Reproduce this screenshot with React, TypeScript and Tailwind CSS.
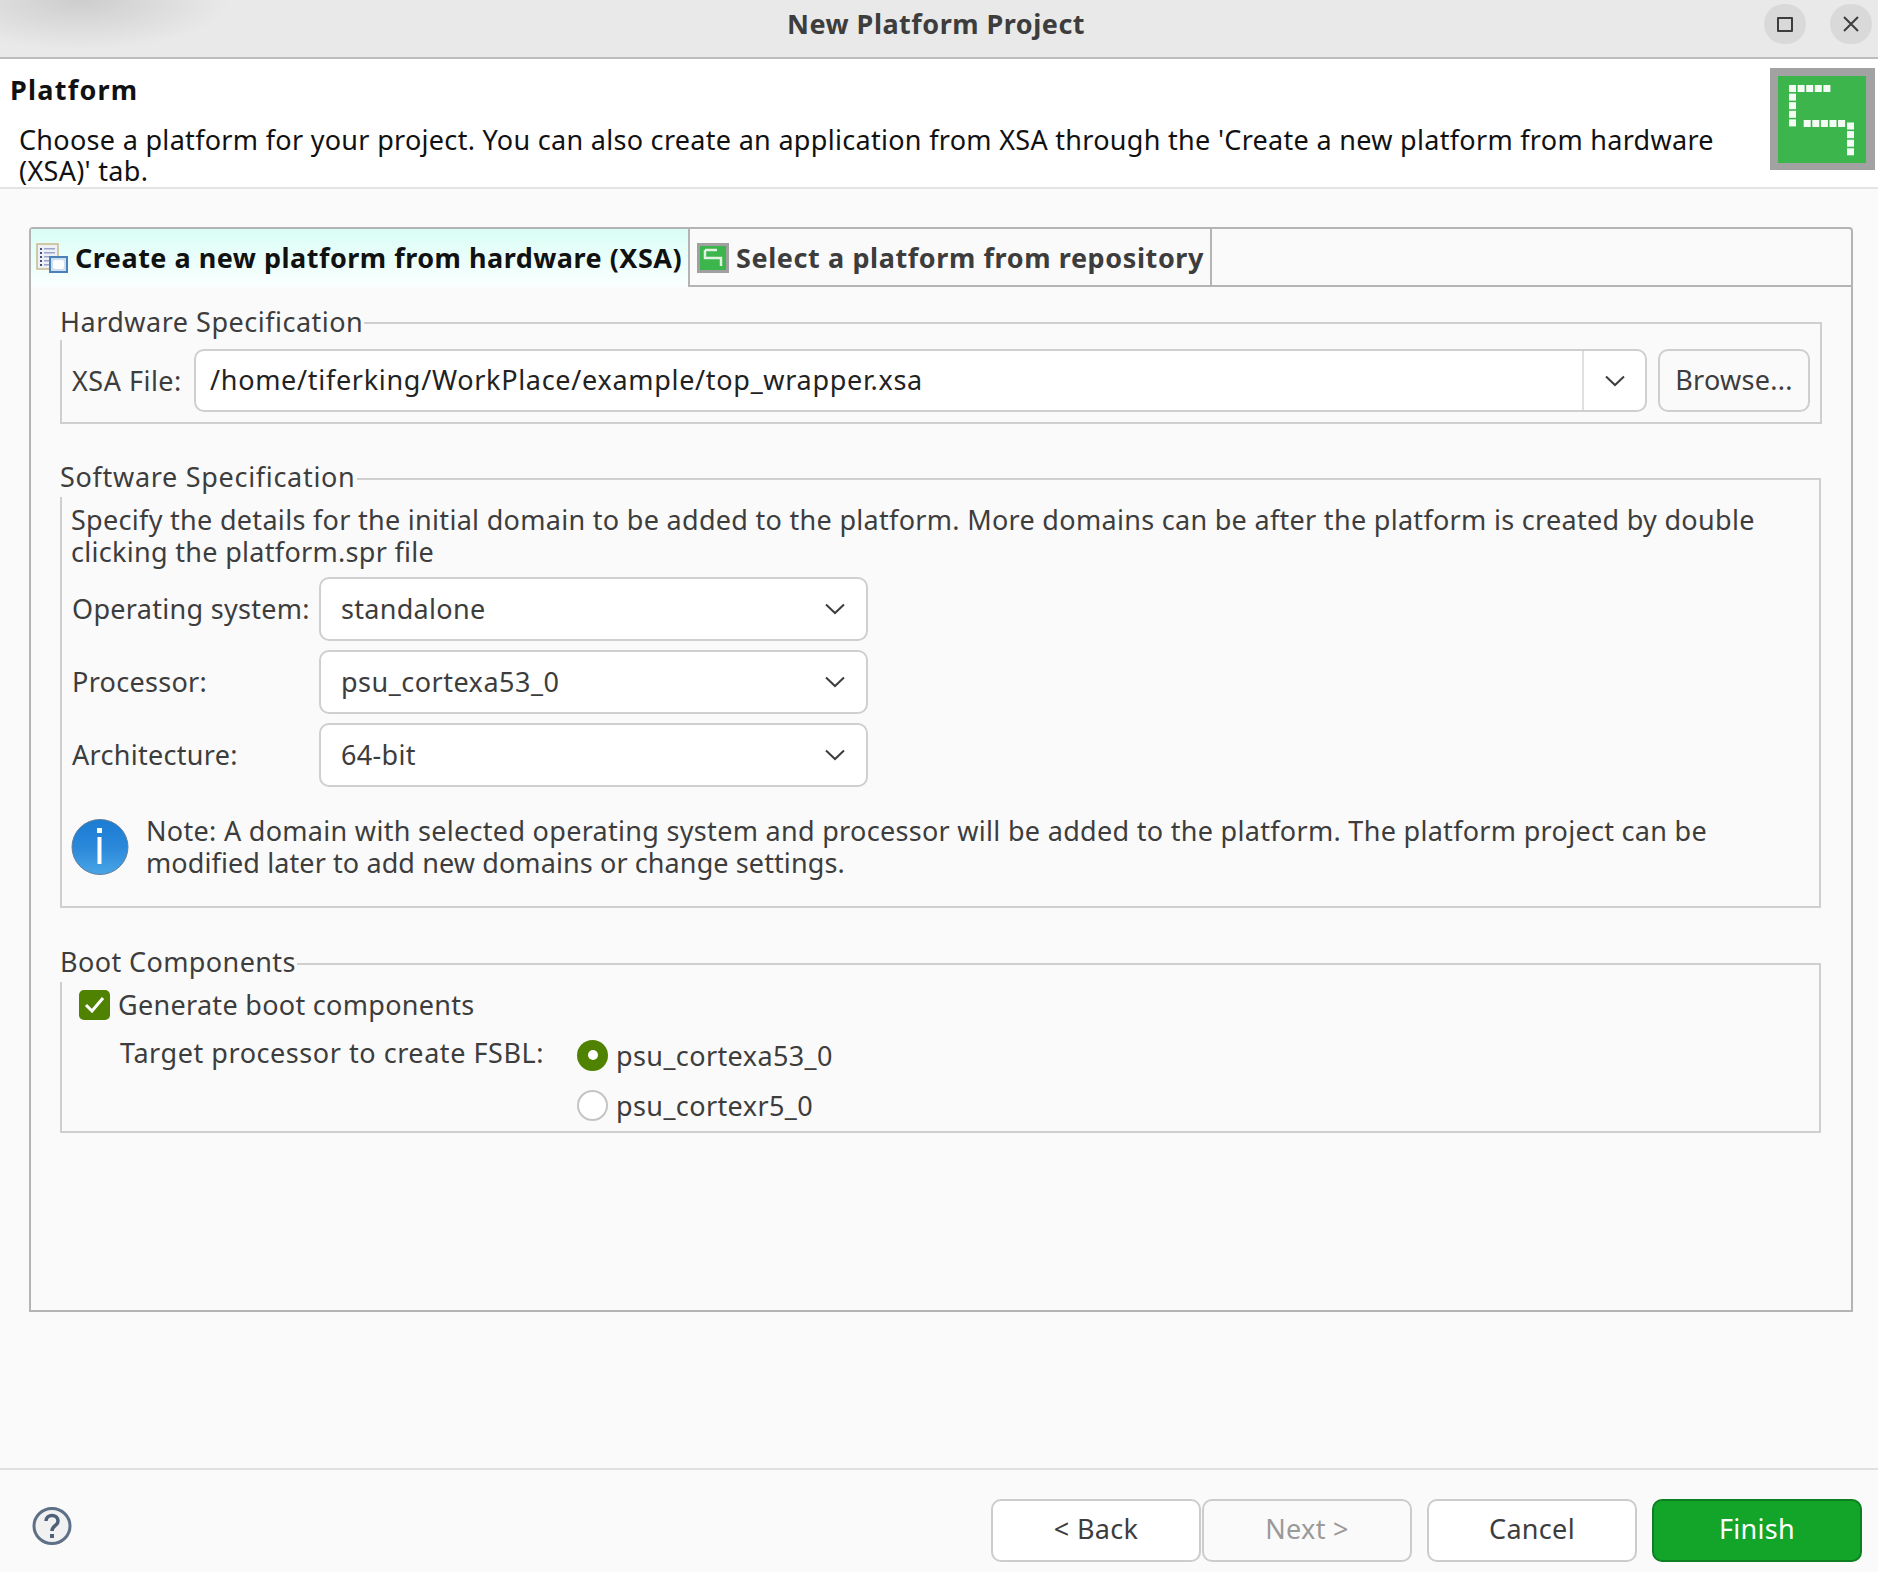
import React from "react";

const Chevron = () => (
	<svg width="22" height="12" viewBox="0 0 22 12" fill="none" stroke="#3d3d3d" strokeWidth="2">
		<path d="M2 1.5 L11 10 L20 1.5" />
	</svg>
);

const dots = [
	...[0, 1, 2, 3, 4].map((i) => [19 + i * 8.6, 17]),
	...[1, 2, 3, 4].map((i) => [19, 17 + i * 8.6]),
	...[0, 1, 2, 3, 4].map((i) => [33.7 + i * 8.6, 52]),
	...[0, 1, 2, 3].map((i) => [77, 54.5 + i * 8.6]),
];

const PlatformIcon = () => (
	<svg width="105" height="102" viewBox="0 0 105 102">
		<rect width="105" height="102" fill="#a2a2a2" />
		<rect x="8" y="8" width="88" height="87" fill="#3cb54c" />
		{dots.map(([x, y], i) => (
			<rect key={i} x={x} y={y} width="7" height="7" fill="#f4fbf4" />
		))}
	</svg>
);

const SmallPlatformIcon = () => (
	<svg width="32" height="30" viewBox="0 0 32 30">
		<rect width="32" height="30" fill="#a0a0a0" />
		<rect x="3" y="3" width="26" height="24" fill="#3cb54c" />
		<path d="M8 7 H20 M8 7 V15 H24 V23" fill="none" stroke="#dff3e0" strokeWidth="2.5" />
	</svg>
);

const HardwareIcon = () => (
	<svg width="32" height="30" viewBox="0 0 32 30">
		<rect x="1" y="1" width="21" height="25" fill="#eef0f8" stroke="#c8b98c" strokeWidth="1.5" />
		{[6, 10, 14, 18, 22].map((y) => (
			<g key={y}>
				<rect x="4" y={y - 1} width="2" height="2" fill="#44507a" />
				<rect x="8" y={y - 1} width="11" height="1.5" fill="#9aa6c8" />
			</g>
		))}
		<rect x="14" y="14" width="17" height="15" fill="#cfdff2" stroke="#4d7fb8" strokeWidth="2" />
		<rect x="17" y="17" width="11" height="9" rx="2" fill="#fbfdff" />
	</svg>
);

const InfoIcon = () => (
	<svg width="58" height="56" viewBox="0 0 58 56" className="shrink-0">
		<defs>
			<linearGradient id="info" x1="0" y1="0" x2="0" y2="1">
				<stop offset="0" stopColor="#1b7cd3" />
				<stop offset="0.5" stopColor="#2a88da" />
				<stop offset="1" stopColor="#4aa5e6" />
			</linearGradient>
		</defs>
		<ellipse cx="29" cy="28" rx="28" ry="27.5" fill="url(#info)" stroke="#5f7f9c" strokeWidth="1" />
		<rect x="26" y="9" width="5" height="5" fill="#fff" />
		<rect x="26.5" y="18" width="4" height="27" fill="#fff" />
	</svg>
);

const HelpIcon = () => (
	<svg width="40" height="38" viewBox="0 0 40 38">
		<ellipse cx="20" cy="19" rx="18" ry="17.5" fill="#f1f1f1" stroke="#5d7088" strokeWidth="3" />
		<path d="M14 14 C14 6.5 26 6.5 26 14 C26 19 20 18.5 20 24" fill="none" stroke="#4d6078" strokeWidth="3.5" />
		<rect x="18" y="27" width="4" height="4" fill="#4d6078" />
	</svg>
);

const SelectRow = ({ label, value, valueClass }: { label: string; value: string; valueClass?: string }) => (
	<div className="flex items-center">
		<div className="w-[257px] pl-[10px]">{label}</div>
		<div className="w-[549px] h-[64px] flex items-center justify-between pl-[20px] pr-[20px] bg-white border-2 border-[#cfcfcf] rounded-[10px]">
			<span className={valueClass}>{value}</span>
			<Chevron />
		</div>
	</div>
);

const WizardButton = ({ children, className }: { children: React.ReactNode; className: string }) => (
	<div className={`w-[210px] h-[63px] pb-[3px] flex items-center justify-center rounded-[10px] border-2 ${className}`}>
		{children}
	</div>
);

export default function App() {
	return (
		<div
			className="w-[1878px] h-[1572px] flex flex-col bg-[#fafafa] text-[#3d3d3d] text-[27px] tracking-[0.3px] leading-[32px] overflow-hidden"
			style={{ fontFamily: '"Noto Sans", sans-serif' }}
		>
			<header className="h-[59px] shrink-0 flex items-center justify-between pr-[6px] bg-[#e9e9e9] bg-[radial-gradient(ellipse_150px_50px_at_80px_0px,#cdcdcd,#e9e9e900)] border-b-2 border-[#bcbcbc]">
				<div className="w-[108px]" />
				<div className="font-bold tracking-[0.5px] text-[#3d3d3d] pb-[9px]">New Platform Project</div>
				<div className="flex gap-[24px] -mt-[9px]">
					<div className="w-[42px] h-[40px] rounded-full bg-[#d9d9d9] flex items-center justify-center">
						<div className="w-[16px] h-[15px] border-2 border-[#3d3d3d] rounded-[1px]" />
					</div>
					<div className="w-[42px] h-[40px] rounded-full bg-[#d9d9d9] flex items-center justify-center">
						<svg width="16" height="16" viewBox="0 0 16 16" stroke="#3d3d3d" strokeWidth="2">
							<path d="M1 1 L15 15 M15 1 L1 15" />
						</svg>
					</div>
				</div>
			</header>

			<section className="h-[130px] shrink-0 flex justify-between bg-white border-b-2 border-[#e4e4e4] text-[#111]">
				<div className="pl-[10px] pt-[15px] whitespace-nowrap">
					<div className="font-bold tracking-[1.25px]">Platform</div>
					<div className="pl-[9px] mt-[18px] leading-[31px]">
						Choose a platform for your project. You can also create an application from XSA through the 'Create a new platform from hardware
						<br />
						(XSA)' tab.
					</div>
				</div>
				<div className="pt-[9px] pr-[3px]">
					<PlatformIcon />
				</div>
			</section>

			<main className="flex-1 pl-[29px] pr-[25px] pt-[38px]">
				<div className="h-[1085px] border-2 border-[#b4b4b4] rounded-t-[4px]">
					<div className="h-[58px] flex border-b-2 border-[#b4b4b4] font-bold tracking-[0.5px] whitespace-nowrap">
						<div className="w-[659px] h-[58px] flex items-center gap-[7px] pl-[5px] bg-gradient-to-b from-[#d9fdf5] to-[#fafffe] border-r-2 border-[#b4b4b4] text-[#111]">
							<HardwareIcon />
							<span>Create a new platform from hardware (XSA)</span>
						</div>
						<div className="w-[522px] h-[56px] pt-[1px] flex items-center gap-[7px] pl-[7px] border-r-2 border-[#b4b4b4]">
							<SmallPlatformIcon />
							<span className="tracking-[0.6px]">Select a platform from repository</span>
						</div>
					</div>

					<div className="pl-[29px] pr-[30px] pt-[19px]">
						<fieldset className="border-2 border-[#cfcfcf] pl-[9px] pr-[10px] pt-[9px] pb-[10px]">
							<legend className="-ml-[11px] pr-[1px] pb-[2px] tracking-[0.5px]">Hardware Specification</legend>
							<div className="flex items-center">
								<div className="w-[123px] shrink-0 pl-[1px] tracking-[0.5px]">XSA File:</div>
								<div className="w-[1453px] h-[63px] flex bg-white border-2 border-[#cfcfcf] rounded-[10px]">
									<div className="flex-1 flex items-center pl-[14px] pb-[2px] text-[#222] tracking-[0.7px]">/home/tiferking/WorkPlace/example/top_wrapper.xsa</div>
									<div className="w-[63px] flex items-center justify-center border-l-2 border-[#e0e0e0]">
										<Chevron />
									</div>
								</div>
								<div className="w-[152px] h-[63px] ml-[11px] pb-[2px] flex items-center justify-center bg-[#fafafa] border-2 border-[#cfcfcf] rounded-[10px]">Browse...</div>
							</div>
						</fieldset>

						<fieldset className="mt-[37px] border-2 border-[#cfcfcf] pt-[7px] pb-[27px]">
							<legend className="-ml-[2px] pr-[1px] pb-[4px] tracking-[0.7px]">Software Specification</legend>
							<div className="pl-[9px] whitespace-nowrap">
								Specify the details for the initial domain to be added to the platform. More domains can be after the platform is created by double
								<br />
								clicking the platform.spr file
							</div>
							<div className="mt-[9px] flex flex-col gap-[9px]">
								<SelectRow label="Operating system:" value="standalone" />
								<SelectRow label="Processor:" value="psu_cortexa53_0" valueClass="tracking-[0.5px]" />
								<SelectRow label="Architecture:" value="64-bit" />
							</div>
							<div className="mt-[28px] pl-[9px] flex items-center gap-[17px] whitespace-nowrap">
								<InfoIcon />
								<div>
									Note: A domain with selected operating system and processor will be added to the platform. The platform project can be
									<br />
									<span className="tracking-[0.1px]">modified later to add new domains or change settings.</span>
								</div>
							</div>
						</fieldset>

						<fieldset className="mt-[38px] h-[187px] border-2 border-[#cfcfcf] pt-[7px]">
							<legend className="-ml-[2px] pr-[1px] pb-[4px] tracking-[0.4px]">Boot Components</legend>
							<div className="pl-[17px] flex items-center gap-[8px]">
								<div className="w-[31px] h-[30px] flex items-center justify-center rounded-[5px] bg-[#4e8200]">
									<svg width="21" height="18" viewBox="0 0 21 18" fill="none" stroke="#fff" strokeWidth="3">
										<path d="M2 9 L8 15 L19 2" />
									</svg>
								</div>
								<span>Generate boot components</span>
							</div>
							<div className="mt-[16px] pl-[58px] flex">
								<div className="w-[457px] tracking-[0.55px]">Target processor to create FSBL:</div>
								<div className="flex flex-col gap-[16px] mt-[1px] tracking-[0.4px]">
									<div className="flex items-center gap-[8px]">
										<div className="w-[31px] h-[31px] rounded-full bg-[#4e8200] flex items-center justify-center">
											<div className="w-[10px] h-[10px] rounded-full bg-white" />
										</div>
										<span className="pt-[2px]">psu_cortexa53_0</span>
									</div>
									<div className="flex items-center gap-[8px]">
										<div className="w-[31px] h-[31px] rounded-full bg-white border-2 border-[#c4c4c4]" />
										<span className="pt-[2px]">psu_cortexr5_0</span>
									</div>
								</div>
							</div>
						</fieldset>
					</div>
				</div>
			</main>

			<footer className="h-[104px] shrink-0 flex items-start justify-between pt-[29px] pl-[32px] pr-[16px] border-t-2 border-[#e0e0e0]">
				<div className="mt-[8px]">
					<HelpIcon />
				</div>
				<div className="flex">
					<WizardButton className="bg-white border-[#cccccc]">&lt; Back</WizardButton>
					<WizardButton className="ml-[1px] bg-[#fafafa] border-[#cccccc] text-[#9a9a9a]">Next &gt;</WizardButton>
					<WizardButton className="ml-[15px] bg-white border-[#cccccc]">Cancel</WizardButton>
					<WizardButton className="ml-[15px] bg-[#12a52a] border-[#0d7f20] text-white">Finish</WizardButton>
				</div>
			</footer>
		</div>
	);
}
